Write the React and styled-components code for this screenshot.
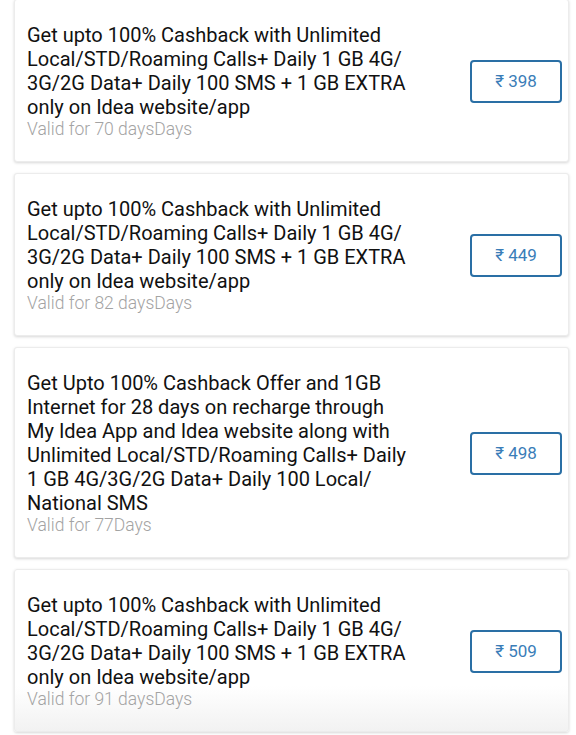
import React from "react";
import styled, { createGlobalStyle } from "styled-components";

const Global = createGlobalStyle`
  html, body { margin: 0; padding: 0; background: #fff; }
  body { font-family: Roboto, "Noto Sans", "DejaVu Sans", sans-serif; }
  * { box-sizing: border-box; }
`;

const List = styled.div`
  display: flex;
  flex-direction: column;
  gap: 11px;
  padding: 0 7px 0 14px;
  margin-top: -1px;
  width: 576px;
  height: 736px;
  overflow: hidden;
`;

const Card = styled.div`
  display: flex;
  align-items: center;
  flex-shrink: 0;
  background: ${(p) =>
    p.$fade ? "linear-gradient(to bottom, #fff 0%, #fff 72%, #f2f2f2 100%)" : "#fff"};
  border: 1px solid #ececec;
  border-radius: 3px;
  box-shadow: 0 1px 3px rgba(0, 0, 0, 0.16);
  padding: 23px 6px 22px 12px;
`;

const Info = styled.div`
  width: 386px;
  display: flex;
  flex-direction: column;
`;

const Title = styled.div`
  font-size: 20px;
  line-height: 24px;
  color: #111;
`;

const Validity = styled.div`
  font-size: 17.5px;
  line-height: 20px;
  font-weight: 300;
  color: #a3a3a3;
`;

const Action = styled.div`
  flex: 1;
  display: flex;
  justify-content: flex-end;
`;

const PriceButton = styled.button`
  width: 92px;
  height: 43px;
  background: #fff;
  border: 2px solid #2a6fa5;
  border-radius: 4px;
  color: #3a7db8;
  font-family: Roboto, "Noto Sans", "DejaVu Sans", sans-serif;
  font-size: 17px;
  font-weight: 400;
  padding: 0;
`;

const plans = [
  {
    title:
      "Get upto 100% Cashback with Unlimited Local/STD/Roaming Calls+ Daily 1 GB 4G/ 3G/2G Data+ Daily 100 SMS + 1 GB EXTRA only on Idea website/app",
    validity: "Valid for 70 daysDays",
    price: "398",
  },
  {
    title:
      "Get upto 100% Cashback with Unlimited Local/STD/Roaming Calls+ Daily 1 GB 4G/ 3G/2G Data+ Daily 100 SMS + 1 GB EXTRA only on Idea website/app",
    validity: "Valid for 82 daysDays",
    price: "449",
  },
  {
    title:
      "Get Upto 100% Cashback Offer and 1GB Internet for 28 days on recharge through My Idea App and Idea website along with Unlimited Local/STD/Roaming Calls+ Daily 1 GB 4G/3G/2G Data+ Daily 100 Local/ National SMS",
    validity: "Valid for 77Days",
    price: "498",
  },
  {
    title:
      "Get upto 100% Cashback with Unlimited Local/STD/Roaming Calls+ Daily 1 GB 4G/ 3G/2G Data+ Daily 100 SMS + 1 GB EXTRA only on Idea website/app",
    validity: "Valid for 91 daysDays",
    price: "509",
  },
];

export default function App() {
  return (
    <>
      <Global />
      <List>
        {plans.map((p, i) => (
          <Card key={i} $fade={i === plans.length - 1}>
            <Info>
              <Title>{p.title}</Title>
              <Validity>{p.validity}</Validity>
            </Info>
            <Action>
              <PriceButton>₹ {p.price}</PriceButton>
            </Action>
          </Card>
        ))}
      </List>
    </>
  );
}
